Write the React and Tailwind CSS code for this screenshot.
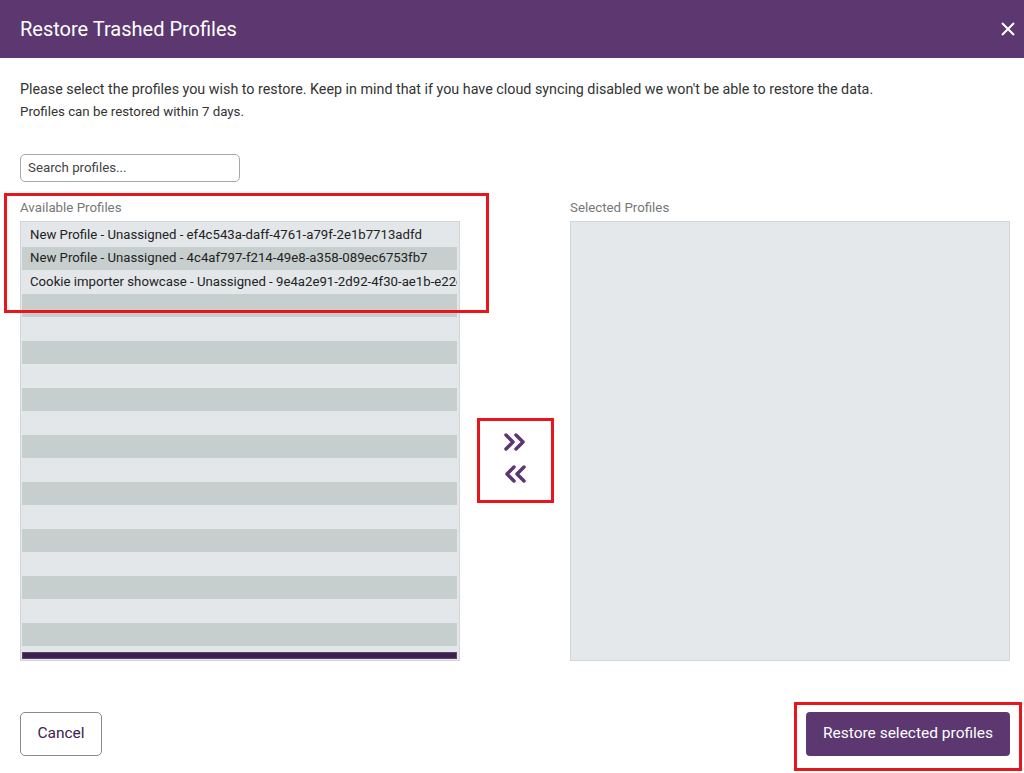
import React from 'react';

const profiles = [
  'New Profile - Unassigned - ef4c543a-daff-4761-a79f-2e1b7713adfd',
  'New Profile - Unassigned - 4c4af797-f214-49e8-a358-089ec6753fb7',
  'Cookie importer showcase - Unassigned - 9e4a2e91-2d92-4f30-ae1b-e22c8a1f3b90',
];

const Row = ({ i, text }) => (
  <div
    className={`h-[23.5px] shrink-0 flex items-center pl-2 whitespace-nowrap overflow-hidden text-[13.2px] text-[#222] ${
      i % 2 === 0 ? 'bg-[#e3e7ea]' : 'bg-[#c7cfce]'
    }`}
  >
    {text}
  </div>
);

const App = () => {
  const rows = Array.from({ length: 19 }, (_, i) => profiles[i] || '');

  return (
    <div className="relative w-[1024px] h-[773px] bg-white overflow-hidden font-['Roboto',sans-serif]">
      <header className="h-[58px] bg-[#5c3770] flex items-center justify-between pl-5 pr-[8px]">
        <h1 className="text-[20px] text-white">Restore Trashed Profiles</h1>
        <svg width="16" height="16" viewBox="0 0 16 16" className="shrink-0">
          <path d="M2 2 L14 14 M14 2 L2 14" stroke="white" strokeWidth="2" />
        </svg>
      </header>

      <div className="pl-5 pr-[14px]">
        <p className="mt-[21px] text-[14.3px] leading-5 text-[#333]">
          Please select the profiles you wish to restore. Keep in mind that if you have cloud syncing disabled we won't be able to restore the data.
        </p>
        <p className="mt-[5px] text-[13.3px] leading-4 text-[#333]">Profiles can be restored within 7 days.</p>

        <div className="mt-[34px] w-[220px] h-[28px] border border-[#a8a8a8] rounded-[5px] flex items-center px-[7px] text-[13.3px] text-[#444]">
          Search profiles...
        </div>

        <div className="mt-[18px] flex">
          <div className="w-[440px]">
            <div className="h-[21px] text-[13.3px] text-[#777] leading-4">Available Profiles</div>
            <div className="h-[440px] border border-[#d3d6d8] bg-[#e3e7ea] pt-[1px] pl-[1px] pr-[1px] flex flex-col">
              <div className="h-[429px] overflow-hidden flex flex-col mr-[1px]">
                {rows.map((t, i) => (
                  <Row key={i} i={i} text={t} />
                ))}
              </div>
              <div className="h-[7px] mr-[1px] bg-[#3d2150] border border-[#5a4466]" />
            </div>
          </div>

          <div className="w-[110px] flex flex-col items-center justify-center pt-[55px] gap-[14px]">
            <svg width="24" height="18" viewBox="0 0 24 18" className="block shrink-0 w-[24px] h-[18px]">
              <path d="M3 2 L10 9 L3 16 M13 2 L20 9 L13 16" fill="none" stroke="#5c3770" strokeWidth="3.5" strokeLinecap="round" strokeLinejoin="round" />
            </svg>
            <svg width="24" height="18" viewBox="0 0 24 18" className="block shrink-0 w-[24px] h-[18px]">
              <path d="M21 2 L14 9 L21 16 M11 2 L4 9 L11 16" fill="none" stroke="#5c3770" strokeWidth="3.5" strokeLinecap="round" strokeLinejoin="round" />
            </svg>
          </div>

          <div className="w-[440px]">
            <div className="h-[21px] text-[13.3px] text-[#777] leading-4">Selected Profiles</div>
            <div className="h-[440px] border border-[#d3d6d8] bg-[#e4e8eb]" />
          </div>
        </div>

        <div className="mt-[51px] flex justify-between">
          <button className="w-[82px] h-[44px] border border-[#8a8a8a] rounded-[5px] text-[15.5px] text-[#3d2150] bg-white">
            Cancel
          </button>
          <button className="w-[204px] h-[44px] rounded-[4px] bg-[#5c3770] text-[15.5px] text-white">
            Restore selected profiles
          </button>
        </div>
      </div>

      <div className="absolute left-[4px] top-[193px] w-[485px] h-[120px] border-[3px] border-[#e8161b]" />
      <div className="absolute left-[477px] top-[418px] w-[77px] h-[85px] border-[3px] border-[#e8161b]" />
      <div className="absolute left-[794px] top-[702px] w-[228px] h-[69px] border-[3px] border-[#e8161b]" />
    </div>
  );
};

export default App;
